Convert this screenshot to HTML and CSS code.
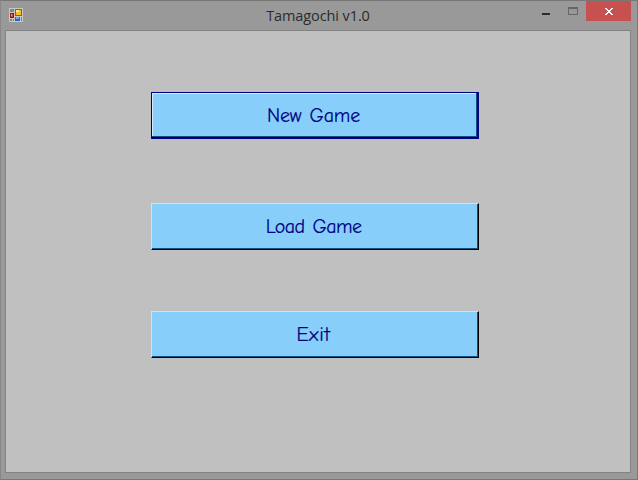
FILE: index.html
```html
<!DOCTYPE html>
<html lang="en">
<head>
<meta charset="utf-8">
<title>Tamagochi v1.0</title>
<link rel="stylesheet" href="styles.css">
</head>
<body>
<div class="window">
  <header class="titlebar">
    <svg class="app-icon" width="14" height="14" viewBox="0 0 14 14" shape-rendering="crispEdges">
      <path fill="#c8c8c8" d="M0 0h14v14H0z"/>
      <path fill="#858585" d="M1 1h4v3H1zM1 11h2v2H1zM4 11h1v2H4zM12 9h1v4h-1z"/>
      <path fill="#8b6410" d="M6 1h7v7H6z"/>
      <path fill="#f5be28" d="M7 2h5v5H7z"/>
      <path fill="#ffe782" d="M7 2h3v2H7z"/>
      <path fill="#8e1712" d="M1 5h4v5H1z"/>
      <path fill="#da372e" d="M2 6h2v3H2z"/>
      <path fill="#f79a92" d="M2 6h1v2H2z"/>
      <path fill="#2c62c4" d="M6 9h5v4H6z"/>
      <path fill="#76a7f2" d="M7 9h3v2H7z"/>
    </svg>
    <h1 class="title">Tamagochi v1.0</h1>
    <div class="controls">
      <svg class="minimize" width="26" height="20" shape-rendering="crispEdges"><path fill="#2b2b2b" d="M6 12h8v2H6z"/></svg>
      <svg class="maximize" width="24" height="20" shape-rendering="crispEdges"><path fill="#666" fill-rule="evenodd" d="M6 6h10v8H6zM7 8v5h8V8z"/></svg>
      <svg class="close" width="45" height="20" shape-rendering="crispEdges"><path fill="#fff" d="M19 7h2v1h1v1h2V8h1V7h2v1h-1v1h-1v1h-1v1h1v1h1v1h1v1h-2v-1h-1v-1h-2v1h-1v1h-2v-1h1v-1h1v-1h1v-1h-1V9h-1V8h-1z"/></svg>
    </div>
  </header>
  <main class="client">
    <button class="btn focused"><span class="new">New Game</span></button>
    <button class="btn"><span class="load">Load Game</span></button>
    <button class="btn"><span class="exit">Exit</span></button>
  </main>
</div>
</body>
</html>
```
FILE: styles.css
```css
* { box-sizing: border-box; }
body { margin: 0; }
.window {
  width: 638px;
  height: 480px;
  border: 1px solid #777;
  border-left-color: #888;
  background: #999;
  display: grid;
  grid-template-rows: 29px 443px;
  overflow: hidden;
}
.titlebar {
  display: grid;
  grid-template-columns: 100px 1fr 100px;
  padding: 0 6px 0 8px;
}
.app-icon { margin-top: 7px; }
.title {
  margin: 4px 4px 0 0;
  text-align: center;
  font: 400 14.5px/22px "Segoe UI", "Open Sans", sans-serif;
  letter-spacing: -0.1px;
  color: #2b2b2b;
}
.controls { display: flex; justify-content: flex-end; }
.close { background: #c75050; }
.client {
  margin: 0 6px 0 4px;
  border: 1px solid #838383;
  background: #c0c0c0;
  display: flex;
  flex-direction: column;
  padding: 61px 0 0 145px;
}
.btn {
  width: 328px;
  height: 47px;
  flex: none;
  margin: 0 0 61px;
  padding: 1px 3px 0 0;
  border: 1px solid #c5e8fc;
  border-right-color: #000;
  border-bottom-color: #000;
  background: #87cefa;
  box-shadow: inset -1px -1px #0d5283;
  color: #000080;
  font: 500 20px/26px "Comic Sans MS", "Comic Neue", "Open Sans", sans-serif;
  -webkit-text-stroke: 0.15px #000080;
}
.focused {
  margin-bottom: 64px;
  border-color: #000080;
  box-shadow: inset -1px 0 #000080, inset 0 -1px #000, inset -2px -2px #0d5283, inset 1px 1px #d3edff;
}
.new { letter-spacing: -0.2px; word-spacing: 1.5px; }
.load { letter-spacing: -0.6px; word-spacing: 2px; }
.exit { letter-spacing: 0.6px; }
```
